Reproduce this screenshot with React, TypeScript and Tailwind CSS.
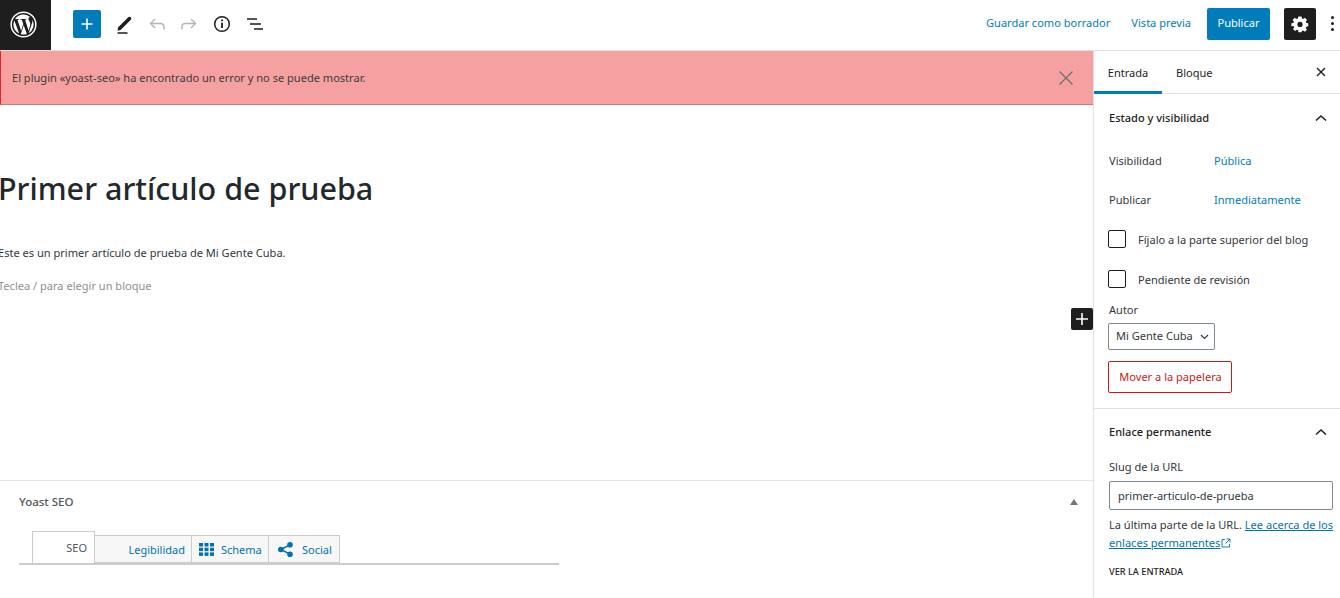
import React from "react";

const font = { fontFamily: '"Noto Sans", "Open Sans", sans-serif' };

function WpLogo() {
  return (
    <svg width="27" height="27" viewBox="0 0 28 28" fill="none">
      <circle cx="14" cy="14" r="12.8" stroke="#fff" strokeWidth="1.500" />
      <path fill="#fff" d="M3.600 14c0 4.100 2.400 7.700 5.900 9.400L4.500 9.800A10.400 10.400 0 0 0 3.600 14Z" />
      <path fill="#fff" d="M21 13.500c0-1.300-.5-2.200-.9-2.900-.5-.9-1-1.600-1-2.500 0-1 .8-1.900 1.800-1.900h.1A10.400 10.400 0 0 0 5.300 8.300h.7c1.100 0 2.800-.1 2.800-.1.600 0 .6.800.1.900 0 0-.6.100-1.200.1l3.800 11.300 2.300-6.900-1.600-4.400c-.6 0-1.100-.1-1.100-.1-.6 0-.5-.9.100-.9 0 0 1.700.1 2.700.1 1.100 0 2.800-.1 2.800-.1.600 0 .6.800.1.900 0 0-.6.100-1.200.1l3.700 11.200 1-3.500c.5-1.300.7-2.300.7-3.100Z" />
      <path fill="#fff" d="m14.200 14.900-3.100 9.100a10.400 10.400 0 0 0 6.400-.2l-.1-.1-3.200-8.800ZM23.200 9c0 .300.100.700.100 1 0 1.100-.2 2.300-.8 3.800l-3.200 9.200A10.400 10.400 0 0 0 23.200 9Z" />
    </svg>
  );
}

function Chevron() {
  return (
    <svg width="16" height="10" viewBox="0 0 16 10" fill="none">
      <path d="M3 7.500 8 3l5 4.500" stroke="#1e1e1e" strokeWidth="1.500" />
    </svg>
  );
}

function Box({ label }: { label: string }) {
  return (
    <div className="flex items-center h-[18px] text-[#32373c]">
      <span className="w-[18px] h-[18px] rounded-[2px] border border-[#1e1e1e] bg-white shrink-0" />
      <span className="ml-[12px] pt-[2px] text-[11.050px]">{label}</span>
    </div>
  );
}

export default function App() {
  return (
    <div className="w-[1340px] h-[598px] overflow-hidden bg-white flex flex-col text-[#32373c]" style={font}>
      <header className="h-[51px] shrink-0 flex items-start border-b border-[#e0e0e0]">
        <div className="w-[51px] h-[50px] bg-[#1e1e1e] flex items-center justify-center pr-[4px] pb-[2px]">
          <WpLogo />
        </div>
        <div className="flex-1 h-[47px] flex items-center">
          <div className="ml-[22px] w-[28px] h-[28px] rounded-[2px] bg-[#007cba] flex items-center justify-center">
            <svg width="14" height="14" viewBox="0 0 14 14">
              <path d="M7 1.500v11M1.500 7h11" stroke="#fff" strokeWidth="1.600" />
            </svg>
          </div>
          <svg className="ml-[14px]" width="20" height="24" viewBox="0 0 20 24" fill="none">
            <path d="M3 15.500 13 5.500c.7-.7 1.800-.9 2.500-.2l.3.300c.7.7.500 1.800-.2 2.500l-10 10-3 .6Z" fill="#1e1e1e" />
            <path d="M2.500 21h10" stroke="#1e1e1e" strokeWidth="1.500" />
          </svg>
          <svg className="ml-[12px]" width="20" height="20" viewBox="0 0 20 20" fill="none">
            <path d="M17 15.500v-2.700c0-2-1.500-3.300-3.500-3.300H4M8 5 3.500 9.500 8 14" stroke="#b5b5b5" strokeWidth="1.400" />
          </svg>
          <svg className="ml-[12px]" width="20" height="20" viewBox="0 0 20 20" fill="none">
            <path d="M3 15.500v-2.700c0-2 1.500-3.300 3.500-3.300H16M12 5l4.500 4.500L12 14" stroke="#b5b5b5" strokeWidth="1.400" />
          </svg>
          <svg className="ml-[14px]" width="18" height="18" viewBox="0 0 18 18" fill="none">
            <circle cx="9" cy="9" r="7.300" stroke="#1e1e1e" strokeWidth="1.500" />
            <path d="M9 7.800v5.200" stroke="#1e1e1e" strokeWidth="1.800" />
            <path d="M9 4.500v1.800" stroke="#1e1e1e" strokeWidth="1.800" />
          </svg>
          <svg className="ml-[15px]" width="18" height="18" viewBox="0 0 18 18" fill="none">
            <path d="M1 4h10M4 9h11M8 14h9" stroke="#1e1e1e" strokeWidth="1.500" />
          </svg>
          <div className="flex-1" />
          <span className="text-[11.050px] text-[#007cba]">Guardar como borrador</span>
          <span className="ml-[21px] text-[11.050px] text-[#007cba]">Vista previa</span>
          <button className="ml-[16px] w-[63px] h-[32px] rounded-[2px] bg-[#007cba] text-white text-[11.050px]">Publicar</button>
          <div className="ml-[14px] w-[32px] h-[32px] rounded-[2px] bg-[#1e1e1e] flex items-center justify-center">
            <svg width="18" height="18" viewBox="0 0 24 24" fill="none">
              <path fillRule="evenodd" clipRule="evenodd" fill="#fff" d="M10 2h4l.5 2.700 1.700.7 2.300-1.600 2.800 2.800-1.600 2.300.7 1.700L23 11v4l-2.600.5-.7 1.700 1.600 2.300-2.800 2.800-2.300-1.600-1.700.7L14 23h-4l-.5-2.600-1.700-.7-2.300 1.600-2.800-2.800 1.600-2.300-.7-1.700L.5 15v-4l2.600-.4.7-1.700-1.600-2.300L5 3.800l2.300 1.600 1.700-.7L10 2Zm2 7a3.500 3.500 0 1 0 0 7 3.500 3.500 0 0 0 0-7Z" />
            </svg>
          </div>
          <div className="ml-[15px] mr-[6px] flex flex-col gap-[3px]">
            <span className="w-[3px] h-[3px] rounded-full bg-[#1e1e1e]" />
            <span className="w-[3px] h-[3px] rounded-full bg-[#1e1e1e]" />
            <span className="w-[3px] h-[3px] rounded-full bg-[#1e1e1e]" />
          </div>
        </div>
      </header>

      <div className="flex flex-1 min-h-0">
        <main className="w-[1093px] shrink-0 flex flex-col">
          <div className="h-[54px] shrink-0 flex items-center justify-between bg-[#f5a1a1] border-l border-l-[#d9272c] border-b border-b-[#c47c7c] pl-[11px] pr-[19px]">
            <span className="pt-[1px] text-[11.050px] text-[#3f3a3c]">El plugin «yoast-seo» ha encontrado un error y no se puede mostrar.</span>
            <svg width="16" height="16" viewBox="0 0 16 16" fill="none">
              <path d="M1.500 1.500l13 13M14.500 1.500l-13 13" stroke="#6f6f6f" strokeWidth="1.300" />
            </svg>
          </div>

          <div className="flex-1 relative">
            <h1 className="mt-[64px] ml-[-2px] h-[40px] flex items-center text-[30.500px] font-medium text-[#23282d] whitespace-nowrap">Primer artículo de prueba</h1>
            <p className="mt-[35px] ml-[-2px] text-[11.050px] leading-[17px] text-[#32373c]">Este es un primer artículo de prueba de Mi Gente Cuba.</p>
            <p className="mt-[16px] ml-[-2px] text-[11.050px] leading-[17px] text-[#8f8f8f]">Teclea / para elegir un bloque</p>
            <div className="absolute right-0 top-[203px] w-[22px] h-[22px] rounded-[2px] bg-[#1e1e1e] flex items-center justify-center">
              <svg width="14" height="14" viewBox="0 0 14 14">
                <path d="M7 1v12M1 7h12" stroke="#fff" strokeWidth="1.600" />
              </svg>
            </div>
          </div>

          <div className="h-[118px] shrink-0 border-t border-[#e2e4e7] pl-[19px]">
            <div className="h-[41px] flex items-center justify-between pr-[15px]">
              <span className="text-[11.500px] font-medium text-[#50575e]">Yoast SEO</span>
              <span className="w-0 h-0 border-l-[4px] border-r-[4px] border-b-[6px] border-l-transparent border-r-transparent border-b-[#72777c]" />
            </div>
            <div className="mt-[10px] w-[540px] h-[33px] border-b-2 border-[#ccc] flex items-end text-[11px]">
              <div className="ml-[13px] w-[63px] h-[33px] -mb-[1px] border border-[#ccc] bg-white flex items-center justify-end pr-[7px] pt-[2px] text-[#50575e]">SEO</div>
              <div className="w-[97px] h-[28px] border border-l-0 border-[#ccc] bg-[#f7f7f7] flex items-center justify-end pr-[6px] pt-[3px] text-[#0073aa]">Legibilidad</div>
              <div className="w-[77px] h-[28px] border border-l-0 border-[#ccc] bg-[#f7f7f7] flex items-center pl-[7px] text-[#0073aa]">
                <svg width="15" height="13" viewBox="0 0 15 13" fill="#0073aa">
                  <rect x="0" y="0" width="4" height="3.500" /><rect x="5.500" y="0" width="4" height="3.500" /><rect x="11" y="0" width="4" height="3.500" />
                  <rect x="0" y="4.700" width="4" height="3.500" /><rect x="5.500" y="4.700" width="4" height="3.500" /><rect x="11" y="4.700" width="4" height="3.500" />
                  <rect x="0" y="9.400" width="4" height="3.500" /><rect x="5.500" y="9.400" width="4" height="3.500" /><rect x="11" y="9.400" width="4" height="3.500" />
                </svg>
                <span className="ml-[7px] pt-[3px]">Schema</span>
              </div>
              <div className="w-[71px] h-[28px] border border-l-0 border-[#ccc] bg-[#f7f7f7] flex items-center pl-[9px] text-[#0073aa]">
                <svg width="15" height="15" viewBox="0 0 15 15" fill="#0073aa">
                  <circle cx="12" cy="2.800" r="2.800" /><circle cx="12" cy="12.200" r="2.800" /><circle cx="2.800" cy="7.500" r="2.800" />
                  <path d="M2.800 7.500 12 2.800M2.800 7.500 12 12.200" stroke="#0073aa" strokeWidth="1.500" />
                </svg>
                <span className="ml-[9px] pt-[3px]">Social</span>
              </div>
            </div>
          </div>
        </main>

        <aside className="w-[247px] shrink-0 border-l border-[#e0e0e0] flex flex-col text-[11.050px]">
          <div className="h-[43px] shrink-0 flex items-stretch border-b border-[#e0e0e0] relative">
            <div className="w-[68px] flex items-center justify-center text-[#1e1e1e] border-b-[3px] border-[#007cba] -mb-[1px] pt-[5px]">Entrada</div>
            <div className="ml-[14px] pt-[2px] flex items-center text-[#1e1e1e]">Bloque</div>
            <div className="flex-1" />
            <svg className="self-center mr-[14px]" width="10" height="10" viewBox="0 0 10 10" fill="none">
              <path d="M1 1l8 8M9 1 1 9" stroke="#1e1e1e" strokeWidth="1.400" />
            </svg>
          </div>

          <section className="h-[315px] shrink-0 border-b border-[#e0e0e0] pl-[14px] pr-[11px] relative">
            <div className="h-[48px] flex items-center justify-between pl-[1px]">
              <span className="font-medium text-[#1e1e1e]">Estado y visibilidad</span>
              <Chevron />
            </div>
            <div className="mt-[9px] h-[20px] flex items-center pl-[1px]">
              <span className="w-[105px]">Visibilidad</span>
              <span className="text-[#007cba]">Pública</span>
            </div>
            <div className="mt-[19px] h-[20px] flex items-center pl-[1px]">
              <span className="w-[105px]">Publicar</span>
              <span className="text-[#007cba]">Inmediatamente</span>
            </div>
            <div className="mt-[20px]"><Box label="Fíjalo a la parte superior del blog" /></div>
            <div className="mt-[22px]"><Box label="Pendiente de revisión" /></div>
            <div className="mt-[14px] h-[16px] flex items-center pl-[1px]">Autor</div>
            <div className="mt-[5px] w-[107px] h-[27px] rounded-[2px] border border-[#7e8993] flex items-center justify-between pl-[7px] pr-[5px] text-[#32373c] whitespace-nowrap">
              <span>Mi Gente Cuba</span>
              <svg width="9" height="6" viewBox="0 0 9 6" fill="none">
                <path d="M1 1l3.500 3.500L8 1" stroke="#32373c" strokeWidth="1.200" />
              </svg>
            </div>
            <button className="mt-[11px] block w-[124px] h-[32px] pl-[1px] rounded-[2px] border border-[#cc1818] text-[#cc1818] text-[11.050px]">Mover a la papelera</button>
          </section>

          <section className="flex-1 pl-[15px] pr-[7px]">
            <div className="h-[46px] flex items-center justify-between pr-[4px]">
              <span className="font-medium text-[#1e1e1e]">Enlace permanente</span>
              <Chevron />
            </div>
            <div className="mt-[4px] h-[16px] flex items-center">Slug de la URL</div>
            <div className="mt-[6px] w-[224px] h-[29px] pt-[2px] rounded-[2px] border border-[#7e8993] flex items-center pl-[8px] text-[#32373c]">primer-articulo-de-prueba</div>
            <p className="mt-[6px] leading-[18px] whitespace-nowrap">
              La última parte de la URL. <span className="underline text-[#0073aa]">Lee acerca de los</span>
              <br />
              <span className="underline text-[#0073aa]">enlaces permanentes</span>
              <svg className="inline-block ml-[1px] align-[-1px]" width="10" height="10" viewBox="0 0 10 10" fill="none">
                <path d="M4 1.500H1v7.500h7.500V6M5.500 1h3.500v3.500M9 1 4.500 5.500" stroke="#0073aa" strokeWidth="0.900" />
              </svg>
            </p>
            <div className="mt-[13px] text-[9.200px] font-medium uppercase text-[#1e1e1e]">Ver la entrada</div>
          </section>
        </aside>
      </div>
    </div>
  );
}
